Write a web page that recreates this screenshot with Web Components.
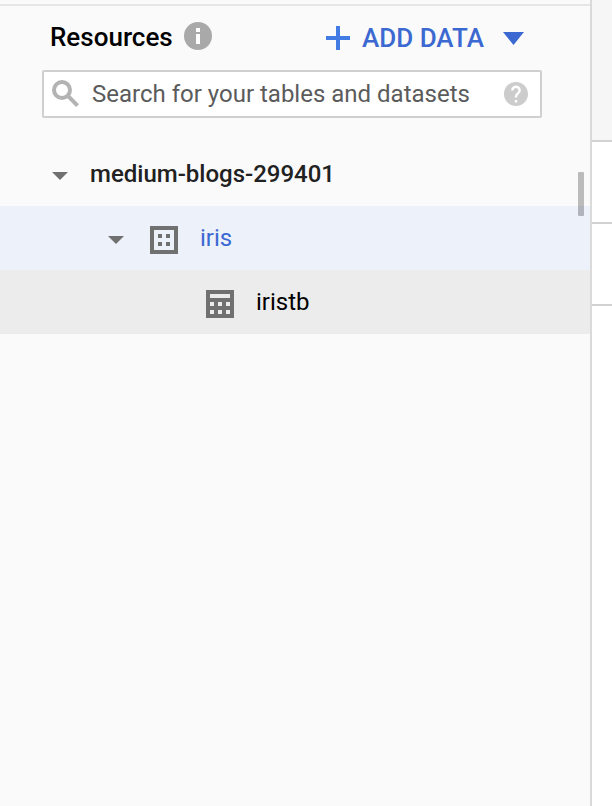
<!DOCTYPE html>
<html lang="en">
<head>
<meta charset="utf-8">
<title>Resources</title>
<style>
html,body{margin:0;height:806px;overflow:hidden;background:#fff}
body{font-family:Roboto,"Liberation Sans",sans-serif}
</style>
</head>
<body>
<resource-app></resource-app>
<script>
const define = (name, html) => {
  const t = document.createElement('template');
  t.innerHTML = html;
  customElements.define(name, class extends HTMLElement {
    constructor() {
      super();
      this.attachShadow({mode: 'open'}).append(t.content.cloneNode(true));
    }
  });
};

const shapes = {
  info: [28, 28, '0 0 28 28', '<circle cx="14" cy="14" r="14"/><path fill="#fff" d="M12 6h4v4h-4zM12 12h4v10h-4z"/>'],
  plus: [24, 24, '0 0 24 24', '<path d="M10 0h4v10h10v4H14v10h-4V14H0v-4h10z"/>'],
  menu: [21, 13, '0 0 21 13', '<path d="M0 0h21L10.5 13z"/>'],
  arrow: [16, 8, '0 0 16 8', '<path d="M0 0h16L8 8z"/>'],
  search: [27, 27, '0 0 27 27', '<g fill="none" stroke="currentColor" stroke-width="4"><circle cx="10" cy="10" r="8"/><path d="M15 15l10.600 10.600"/></g>'],
  help: [24, 24, '2 2 20 20', '<path d="M12 2C6.48 2 2 6.48 2 12s4.480 10 10 10 10-4.480 10-10S17.520 2 12 2zm1 17h-2v-2h2v2zm2.070-7.750l-.9.920C13.450 12.900 13 13.500 13 15h-2v-.5c0-1.100.45-2.100 1.170-2.830l1.240-1.260c.37-.36.59-.86.59-1.410 0-1.100-.9-2-2-2s-2 .9-2 2H8c0-2.210 1.790-4 4-4s4 1.790 4 4c0 .88-.36 1.680-.93 2.250z"/>'],
  dataset: [28, 28, '0 0 28 28', '<path fill-rule="evenodd" d="M0 0h28v28H0zM4 4v20h20V4zM8 8h4v4H8zM16 8h4v4h-4zM8 16h4v4H8zM16 16h4v4h-4z"/>'],
  table: [28, 28, '0 0 28 28', '<path fill-rule="evenodd" d="M0 0h28v28H0zM4 4v4h20V4zM4 12v4h4v-4zM12 12v4h4v-4zM20 12v4h4v-4zM4 20v4h4v-4zM12 20v4h4v-4zM20 20v4h4v-4z"/>']
};
customElements.define('ui-icon', class extends HTMLElement {
  constructor() {
    super();
    this.attachShadow({mode: 'open'});
  }
  connectedCallback() {
    const [w, h, box, body] = shapes[this.getAttribute('name')];
    this.shadowRoot.innerHTML = `<style>:host{display:block;flex:none}svg{display:block;fill:currentColor}</style>
      <svg width="${w}" height="${h}" viewBox="${box}">${body}</svg>`;
  }
});

define('panel-header', `<style>
  :host{display:flex;height:64px;padding-left:50px;box-sizing:border-box;color:#000}
  span{flex:none;white-space:nowrap}
  .title{font:500 26px/62px Roboto,sans-serif;width:134px}
  .info{color:#a9a9a9;padding-top:16px}
  .plus{color:#437be4;margin-left:114px;padding-top:20px}
  .add{font:500 26px/64px Roboto,sans-serif;color:#3c69d1;margin-left:12px;width:141px}
  .caret{color:#3c69d1;margin:26px 0 0}
</style>
<span class="title">Resources</span><ui-icon class="info" name="info"></ui-icon>
<ui-icon class="plus" name="plus"></ui-icon><span class="add">ADD DATA</span><ui-icon class="caret" name="menu"></ui-icon>`);

define('search-box', `<style>
  :host{display:flex;box-sizing:border-box;width:500px;height:48px;margin-left:42px;border:2px solid #d0d0d0;border-radius:2px;background:#fff;padding:0 12px 0 8px}
  .glass{color:#b3b3b3;padding-top:8px}
  .text{font:400 24px/44px Roboto,sans-serif;color:#5b5b5b;margin-left:13px;flex:1;white-space:nowrap}
  .help{color:#ccc;padding-top:10px}
</style>
<ui-icon class="glass" name="search"></ui-icon><span class="text"><slot></slot></span><ui-icon class="help" name="help"></ui-icon>`);

define('tree-row', `<style>
  :host{display:flex;height:64px;box-sizing:border-box;font:400 24px/64px Roboto,sans-serif;white-space:nowrap}
  :host([level="1"]){padding-left:52px;color:#212121;font-weight:500}
  :host([level="2"]){padding-left:108px;background:#ecf1fa;color:#3b69d2}
  :host([level="3"]){padding-left:206px;background:#ececec;color:#000}
  ::slotted([name=arrow]){color:#707070;margin-top:30px}
  ::slotted([name=dataset]){color:#707070;margin:20px 0 0 26px}
  ::slotted([name=table]){color:#707070;margin-top:20px}
  .label{margin-left:22px}
</style>
<slot name="icons"></slot><span class="label"><slot></slot></span>`);

define('side-panel', `<style>
  :host{display:block;position:relative;box-sizing:border-box;height:806px;padding-top:4px;background:#fafafa;border-right:2px solid #dadada}
  .rule{height:2px;background:#e6e6e6}
  nav{margin-top:24px}
  .thumb{position:absolute;right:6px;top:172px;width:6px;height:44px;border-radius:1px;background:rgba(0,0,0,.25)}
</style>
<div class="rule"></div><slot></slot>
<nav><slot name="tree"></slot></nav><div class="thumb"></div>`);

define('editor-edge', `<style>
  :host{display:block}
  div{box-sizing:border-box;height:82px;border-bottom:2px solid #d2d2d2;background:#fff}
  .bar{height:142px;background:#f6f6f6}
</style><div class="bar"></div><div></div><div></div>`);

define('resource-app', `<style>
  :host{display:grid;grid-template-columns:592px 20px;width:612px;height:806px}
</style>
<side-panel>
  <panel-header></panel-header>
  <search-box>Search for your tables and datasets</search-box>
  <tree-row slot="tree" level="1"><ui-icon slot="icons" name="arrow"></ui-icon>medium-blogs-299401</tree-row>
  <tree-row slot="tree" level="2"><ui-icon slot="icons" name="arrow"></ui-icon><ui-icon slot="icons" name="dataset"></ui-icon>iris</tree-row>
  <tree-row slot="tree" level="3"><ui-icon slot="icons" name="table"></ui-icon>iristb</tree-row>
</side-panel>
<editor-edge></editor-edge>`);
</script>
</body>
</html>
